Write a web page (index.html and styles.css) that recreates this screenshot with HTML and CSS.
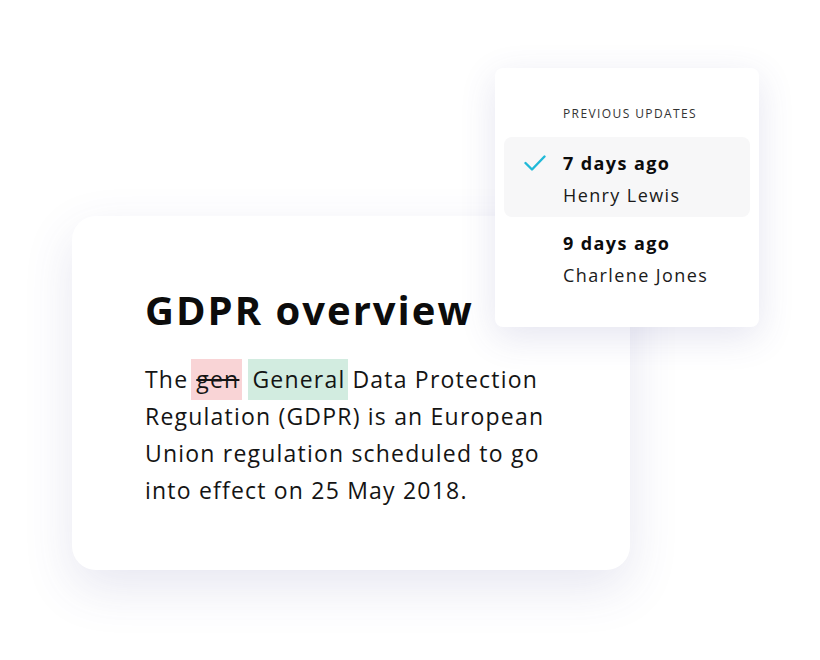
FILE: index.html
```html
<!DOCTYPE html>
<html lang="en">
<head>
<meta charset="utf-8">
<title>GDPR overview</title>
<link rel="stylesheet" href="styles.css">
</head>
<body>
<div class="stage">
  <article class="card">
    <h1 class="title">GDPR overview</h1>
    <p class="text">The<del class="del">gen</del><ins class="ins">General</ins>Data Protection Regulation (GDPR) is an European Union regulation scheduled to go into effect on 25 May 2018.</p>
  </article>

  <aside class="popup">
    <div class="popup-head">PREVIOUS UPDATES</div>
    <ul class="updates">
      <li class="update is-active">
        <span class="check">
          <svg width="22" height="16" viewBox="0 0 22 16"><path d="M1.5 8 L8 14.5 L20.5 1.5" fill="none" stroke="#20b9d8" stroke-width="2.4" stroke-linecap="round" stroke-linejoin="round"/></svg>
        </span>
        <div class="update-text">
          <div class="when">7 days ago</div>
          <div class="who">Henry Lewis</div>
        </div>
      </li>
      <li class="update">
        <span class="check"></span>
        <div class="update-text">
          <div class="when">9 days ago</div>
          <div class="who">Charlene Jones</div>
        </div>
      </li>
    </ul>
  </aside>
</div>
</body>
</html>
```
FILE: styles.css
```css
html, body {
  margin: 0;
  padding: 0;
  background: #ffffff;
}

body {
  font-family: "Open Sans", "Liberation Sans", sans-serif;
  color: #111111;
}

.stage {
  position: relative;
  width: 820px;
  height: 660px;
  box-sizing: border-box;
  padding: 216px 0 0 72px;
  overflow: hidden;
}

.card {
  width: 558px;
  height: 354px;
  box-sizing: border-box;
  padding: 70px 0 0 73px;
  background: #ffffff;
  border-radius: 24px;
  box-shadow: 0 18px 50px rgba(70, 70, 150, 0.13);
}

.title {
  margin: 0;
  font-size: 40px;
  line-height: 48px;
  font-weight: 700;
  letter-spacing: 2px;
  color: #0c0c0c;
}

.text {
  margin: 27px 0 0;
  width: 430px;
  font-size: 23px;
  line-height: 37px;
  letter-spacing: 1.2px;
  color: #141414;
}

.del,
.ins {
  text-decoration: none;
  padding: 4px 4px 5px;
}

.del {
  margin-left: 3px;
  padding-left: 5px;
  padding-right: 3px;
  background: #f9d4d6;
  text-decoration: line-through;
  text-decoration-thickness: 1.5px;
}

.ins {
  margin: 0 4px 0 6px;
  padding-right: 3px;
  background: #d2ece0;
}

.popup {
  position: absolute;
  left: 495px;
  top: 68px;
  width: 264px;
  height: 259px;
  box-sizing: border-box;
  padding: 38px 9px 0;
  background: #ffffff;
  border-radius: 8px;
  box-shadow: 0 10px 36px rgba(70, 70, 150, 0.14);
}

.popup-head {
  padding-left: 59px;
  font-size: 12px;
  line-height: 16px;
  letter-spacing: 1.4px;
  color: #333333;
}

.updates {
  list-style: none;
  margin: 15px 0 0;
  padding: 0;
}

.update {
  display: flex;
  height: 80px;
  box-sizing: border-box;
  padding: 10px 0 6px 20px;
  border-radius: 8px;
}

.update.is-active {
  background: #f7f7f8;
}

.check {
  width: 39px;
  height: 32px;
  display: flex;
  align-items: center;
}

.check svg {
  display: block;
}

.when {
  font-size: 18px;
  line-height: 32px;
  font-weight: 700;
  letter-spacing: 1.4px;
  color: #0c0c0c;
}

.who {
  font-size: 18px;
  line-height: 32px;
  color: #1a1a1a;
  letter-spacing: 1.4px;
}
```
